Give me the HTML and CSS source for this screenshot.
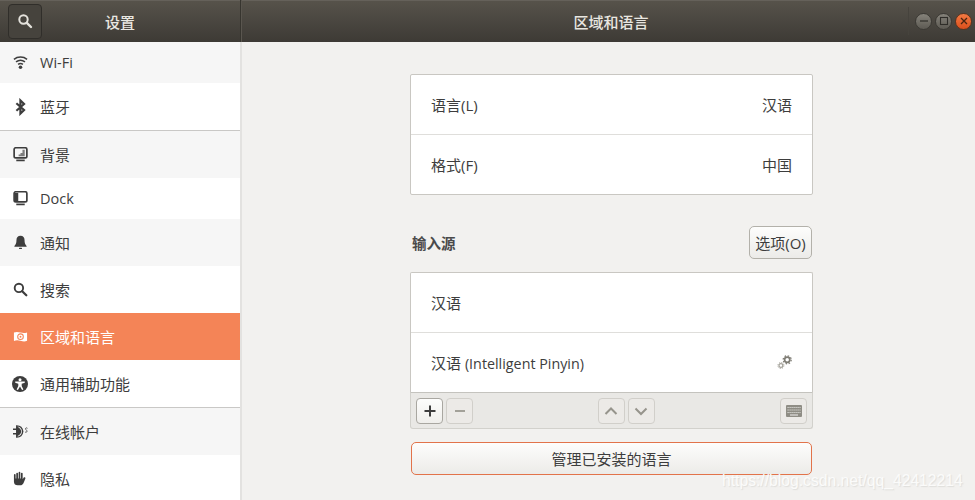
FILE: index.html
```html
<!DOCTYPE html>
<html lang="zh-CN">
<head>
<meta charset="utf-8">
<title>区域和语言</title>
<link rel="stylesheet" href="styles.css">
</head>
<body>
<div class="window">
  <header class="headerbar">
    <div class="head-left">
      <button class="search-btn" aria-label="搜索">
        <svg width="16" height="16" viewBox="0 0 16 16"><circle cx="6.5" cy="6.5" r="4.2" fill="none" stroke="#e4e2dc" stroke-width="2"/><path d="M9.8 9.8 14 14" stroke="#e4e2dc" stroke-width="2.4" stroke-linecap="round"/></svg>
      </button>
      <div class="head-title-left">设置</div>
    </div>
    <div class="head-right">
      <div class="head-title">区域和语言</div>
      <div class="wm-buttons">
        <span class="wm wm-min"><svg width="10" height="10" viewBox="0 0 10 10"><path d="M1 5h8" stroke="#2f2d29" stroke-width="1.2"/></svg></span>
        <span class="wm wm-max"><svg width="10" height="10" viewBox="0 0 10 10"><rect x="1.5" y="1.5" width="7" height="7" fill="none" stroke="#2f2d29" stroke-width="1.1"/></svg></span>
        <span class="wm wm-close"><svg width="10" height="10" viewBox="0 0 10 10"><path d="M2 2l6 6M8 2 2 8" stroke="#4a2410" stroke-width="1.3"/></svg></span>
      </div>
    </div>
  </header>
  <div class="body">
    <nav class="sidebar">
      <div class="item h41 odd">
        <svg class="ico" viewBox="0 0 16 16" fill="none" stroke="#3d3d3d" stroke-width="1.6"><path d="M1 4.600C5 1.400 11 1.400 15 4.600"/><path d="M3.200 7.400C6 5.200 10 5.200 12.800 7.400"/><path d="M5.400 10C7 8.800 9 8.800 10.600 10"/><circle cx="8" cy="13" r="1.900" fill="#3d3d3d" stroke="none"/></svg>
        <span class="lat">Wi-Fi</span>
      </div>
      <div class="item h47 sep">
        <svg class="ico ico-tall" viewBox="0 0 16 18" fill="none" stroke="#3d3d3d" stroke-width="2.300"><path d="M3.600 5 11.800 12.200 7.900 16V2L11.800 5.800 3.600 13"/></svg>
        <span>蓝牙</span>
      </div>
      <div class="item h47 odd">
        <svg class="ico" viewBox="0 0 16 16"><rect x="1.200" y=".8" width="13.600" height="10.800" rx="1.800" fill="none" stroke="#3d3d3d" stroke-width="1.800"/><path d="M6 9.800h6.500V3h-2.400v3.400H8v1.600H6z" fill="#7d7d7d"/><rect x="3.500" y="13.400" width="9" height="1.800" fill="#3d3d3d"/></svg>
        <span>背景</span>
      </div>
      <div class="item h41">
        <svg class="ico" viewBox="0 0 16 16"><rect x="1.200" y=".8" width="13.600" height="10.800" rx="1.800" fill="none" stroke="#3d3d3d" stroke-width="1.800"/><rect x="2" y="2" width="3.600" height="9" fill="#3d3d3d"/><rect x="3.500" y="13.400" width="9" height="1.800" fill="#3d3d3d"/></svg>
        <span class="lat">Dock</span>
      </div>
      <div class="item h47 odd">
        <svg class="ico" viewBox="0 0 16 16" fill="#3d3d3d"><path d="M8 .8c2.800 0 4.300 2 4.300 4.600 0 3 .6 4.700 2.200 6.200v.9H1.500v-.9C3.100 10.100 3.700 8.400 3.700 5.400 3.700 2.800 5.200.8 8 .8z"/><rect x="6.400" y="13.600" width="3.200" height="1.300" rx=".6"/></svg>
        <span>通知</span>
      </div>
      <div class="item h47">
        <svg class="ico" viewBox="0 0 16 16"><circle cx="6.300" cy="6.300" r="4.500" fill="none" stroke="#3d3d3d" stroke-width="2"/><path d="M9.800 9.800 14.200 14.200" stroke="#3d3d3d" stroke-width="2.400" stroke-linecap="round"/></svg>
        <span>搜索</span>
      </div>
      <div class="item h47 active">
        <svg class="ico" viewBox="0 0 16 16"><path d="M1 3.800C3.500 2.800 5.500 3.200 8 3.800s4.500.8 7-.2v9c-2.500 1-4.500.6-7 0s-4.500-.8-7 .2z" fill="#fff"/><circle cx="8" cy="8.200" r="3" fill="none" stroke="#f48457" stroke-width="1.100"/><circle cx="8" cy="8.200" r="1" fill="#f48457"/></svg>
        <span>区域和语言</span>
      </div>
      <div class="item h47 sep">
        <svg class="ico ico-full" viewBox="0 0 16 16"><circle cx="8" cy="8" r="8" fill="#3d3d3d"/><circle cx="8" cy="3.700" r="1.500" fill="#fff"/><path d="M3.200 5.400h9.600v1.400L9.700 7.700v2.400l1.700 3.500-1.300.5L8 10.600l-2.100 3.500-1.300-.5 1.700-3.500V7.700L3.200 6.800z" fill="#fff"/></svg>
        <span>通用辅助功能</span>
      </div>
      <div class="item h47 odd">
        <svg class="ico" viewBox="0 0 16 16" fill="#3d3d3d"><path d="M0 4.800h4.400v1.500H0zM0 9.700h4.400v1.500H0z"/><path d="M4 2c3.400 0 5.900 2.600 6.400 6-.5 3.400-3 6-6.400 6z" fill="none" stroke="#3d3d3d" stroke-width="1.500"/><path d="M4 3v10c2.600-.5 4.400-2.500 4.800-5C8.400 5.500 6.600 3.500 4 3z"/><path d="M15.400 4.600c-.9-.9-2.300-.4-2 .7.200.9 1.600 1.400 1.500 2.600-.1 1-1.400 1.200-2.100.5" fill="none" stroke="#3d3d3d" stroke-width=".9"/></svg>
        <span>在线帐户</span>
      </div>
      <div class="item h47">
        <svg class="ico" viewBox="0 0 16 16" fill="#3d3d3d"><path d="M1 4.200a.9.900 0 0 1 1.800 0V8h.7V2.700a.9.900 0 0 1 1.800 0V8H6V1.800a.9.900 0 0 1 1.800 0V8h.7V2.700a.9.900 0 0 1 1.800 0v6.100l1-1.600c.6-.9 2.200-.3 1.900.7l-1.600 4c-.6 2-2.100 3.400-4.200 3.400H5c-2.400 0-4-1.400-4-3.800z"/></svg>
        <span>隐私</span>
      </div>
    </nav>
    <main class="content">
      <section class="column">
        <div class="list">
          <div class="row"><span>语言(L)</span><span>汉语</span></div>
          <div class="row"><span>格式(F)</span><span>中国</span></div>
        </div>
        <div class="section-head">
          <span class="section-title">输入源</span>
          <button class="btn options">选项(O)</button>
        </div>
        <div class="list list-joined">
          <div class="row"><span>汉语</span></div>
          <div class="row">
            <span>汉语 <span class="latin-tight">(Intelligent Pinyin)</span></span>
            <svg class="gears" width="16" height="16" viewBox="0 0 16 16" fill="none" stroke="#7f7d75"><circle cx="10.200" cy="5.800" r="2.600" stroke-width="1.700"/><circle cx="10.200" cy="5.800" r="4" stroke-width="1.300" stroke-dasharray="1.500 1.640"/><circle cx="3.900" cy="11.500" r="1.900" stroke="#a5a39b" stroke-width="1.200"/><circle cx="3.900" cy="11.500" r="3" stroke="#a5a39b" stroke-width="1" stroke-dasharray="1.200 1.160"/></svg>
          </div>
        </div>
        <div class="toolbar">
          <div class="tool-group">
            <button class="tool tool-on"><svg width="14" height="14" viewBox="0 0 14 14"><path d="M7 1.500v11M1.500 7h11" stroke="#3d3d3d" stroke-width="2"/></svg></button>
            <button class="tool"><svg width="14" height="14" viewBox="0 0 14 14"><path d="M2 7h10" stroke="#a3a199" stroke-width="2"/></svg></button>
          </div>
          <div class="tool-group group-mid">
            <button class="tool"><svg width="14" height="14" viewBox="0 0 14 14" fill="none"><path d="M1.500 10 7 4.500 12.500 10" stroke="#96948c" stroke-width="2"/></svg></button>
            <button class="tool"><svg width="14" height="14" viewBox="0 0 14 14" fill="none"><path d="M1.500 4.500 7 10l5.500-5.500" stroke="#96948c" stroke-width="2"/></svg></button>
          </div>
          <button class="tool"><svg width="16" height="12" viewBox="0 0 16 12"><rect width="16" height="12" rx="1" fill="#8f8d85"/><path d="M1.500 2.500h13M1.500 5h13M1.500 7.500h13" stroke="#e9e8e5" stroke-width=".9" stroke-dasharray="1.200 .8"/><path d="M4 10h8" stroke="#e9e8e5" stroke-width="1.100"/></svg></button>
        </div>
        <button class="btn manage">管理已安装的语言</button>
      </section>
    </main>
  </div>
  <div class="watermark">https://blog.csdn.net/qq_42412214</div>
</div>
</body>
</html>
```
FILE: styles.css
```css
* { box-sizing: border-box; }
html, body { margin: 0; padding: 0; }
body {
  width: 975px;
  height: 500px;
  overflow: hidden;
  font-family: "Open Sans", "Noto Sans CJK SC", sans-serif;
  font-size: 14.5px;
  color: #3d3d3d;
}
.window { position: relative; width: 975px; height: 500px; overflow: hidden; background: #f2f1ef; }
button { font: inherit; color: inherit; padding: 0; }

.headerbar {
  display: flex;
  height: 42px;
  background: linear-gradient(#57534b, #3d3a35);
  box-shadow: inset 0 1px 0 #65615a;
  color: #e9e7e1;
}
.head-left { display: flex; align-items: center; width: 241px; padding-left: 8px; border-right: 1px solid #37352f; }
.search-btn {
  display: flex; align-items: center; justify-content: center;
  width: 34px; height: 35px;
  background: #46433d;
  border: 1px solid #302e2a;
  border-radius: 4px;
}
.head-title-left { width: 156px; text-align: center; font-size: 15px; font-weight: 500; }
.head-right { flex: 1; display: flex; align-items: center; position: relative; border-left: 1px solid #5a564f; }
.head-title { flex: 1; text-align: center; font-size: 15px; font-weight: 500; padding-left: 5px; }
.wm-buttons {
  position: absolute; right: 3px; top: 7px;
  display: flex; gap: 3px; align-items: center;
  padding-left: 6px;
  border-left: 1px solid #46433d;
  height: 28px;
}
.wm {
  width: 17px; height: 17px; border-radius: 50%;
  display: flex; align-items: center; justify-content: center;
  background: linear-gradient(#85827a, #5d5a53);
  border: 1px solid #3b3934;
}
.wm-close { background: linear-gradient(#f37a43, #dc4f1c); border-color: #5b3420; }

.body { display: flex; height: 458px; }
.sidebar {
  width: 240px; flex: none;
  background: #fff;
  overflow: hidden;
}
.item { display: flex; align-items: center; padding-left: 12px; gap: 12px; font-size: 15px; flex: none; width: 240px; }
.h41 { height: 41px; }
.h47 { height: 47px; }
.item.sep { box-shadow: 0 1px 0 #c9c8c6; margin-bottom: 1px; }
.odd { background: #f6f6f6; }
.active { background: #f48457; color: #fff; }
.ico { flex: none; width: 15px; height: 15px; margin: 0 .5px; }
.ico-tall { height: 18px; }
.ico-full { width: 16px; height: 16px; margin: 0; }
.lat { font-size: 14.5px; }

.content {
  flex: 1;
  border-left: 2px solid #e3e2e0;
  padding: 32px 0 0 168px;
}
.column { width: 403px; }
.list {
  background: #fff;
  border: 1px solid #c9c7c2;
  border-radius: 2px;
}
.row {
  display: flex; align-items: center; justify-content: space-between;
  height: 59px;
  padding: 0 20px;
  font-size: 15px;
}
.row + .row { height: 60px; border-top: 1px solid #dfdedb; }
.latin-tight { font-size: 14.3px; }
.section-head {
  display: flex; align-items: center; justify-content: space-between;
  height: 33px;
  margin: 31px 0 13px;
  padding-left: 2px;
}
.section-title { font-weight: 700; font-size: 14.5px; color: #4a4a4a; }
.btn {
  background: linear-gradient(#fdfdfc, #ecebe8);
  border: 1px solid #b3b1aa;
  border-radius: 5px;
  font-size: 15px;
}
.options { width: 63px; height: 33px; margin-right: 1px; }
.list-joined { border-radius: 2px 2px 0 0; border-bottom: 0; }
.gears { margin-right: -1px; margin-top: -2px; }
.toolbar {
  display: flex; align-items: center; justify-content: space-between;
  height: 37px;
  background: #e9e8e5;
  border: 1px solid #d2d1cc;
  border-top: 1px solid #c4c3be;
  border-radius: 0 0 3px 3px;
  padding: 0 5px;
}
.tool-group { display: flex; gap: 3px; }
.group-mid { margin-left: -1px; }
.tool {
  display: flex; align-items: center; justify-content: center;
  width: 27px; height: 26px;
  background: #eceae7;
  border: 1px solid #d1cfca;
  border-radius: 4px;
}
.tool-on { background: linear-gradient(#fdfdfc, #efeeeb); border-color: #a9a7a1; }
.manage {
  display: block;
  width: 401px; height: 33px;
  margin: 13px 0 0 1px;
  border-color: #e2734a;
}
.watermark {
  position: absolute;
  left: 722px; top: 472px;
  font-family: "Liberation Sans", sans-serif;
  font-size: 15.7px;
  color: #fbfbfa;
  text-shadow: 1px 1px 1px rgba(205, 205, 203, .55);
  white-space: nowrap;
}
```
